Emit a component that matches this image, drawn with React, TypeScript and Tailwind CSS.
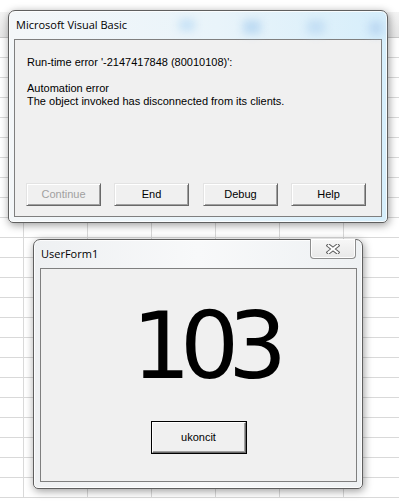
import React from "react";

const colWidths = ["w-[24px]", "w-[64px]", "w-[64px]", "w-[64px]", "w-[64px]", "w-[64px]", "w-[64px]"];
const rows = Array.from({ length: 23 }, (_, i) => i);

function Sheet() {
  return (
    <div className="flex flex-col bg-white">
      <div className="h-[12px] shrink-0" />
      <div className="flex h-[26px] shrink-0 bg-[linear-gradient(to_bottom,#f4f4f4,#e6e6e6)] border-b border-[#c9c9c9]">
        {colWidths.map((w, i) => (
          <div key={i} className={`${w} shrink-0 border-r border-[#d0d0d0]`} />
        ))}
      </div>
      {rows.map((r) => (
        <div key={r} className="flex h-[20px] shrink-0 border-b border-[#d9d9d9]">
          {colWidths.map((w, i) => (
            <div key={i} className={`${w} shrink-0 border-r border-[#d9d9d9]`} />
          ))}
        </div>
      ))}
    </div>
  );
}

function ClassicButton({ label, disabled }: { label: string; disabled?: boolean }) {
  return (
    <div
      className={
        "flex h-[23px] w-[75px] items-center justify-center bg-[#f0f0f0] border border-t-[#e3e3e3] border-l-[#e3e3e3] border-r-[#696969] border-b-[#696969] shadow-[inset_1px_1px_0_#ffffff,inset_-1px_-1px_0_#a0a0a0] text-[11px] " +
        (disabled ? "text-[#a0a0a0]" : "text-black")
      }
    >
      {label}
    </div>
  );
}

export default function App() {
  return (
    <div className="relative h-[503px] w-[399px] overflow-hidden bg-white font-['Liberation_Sans',Arial,sans-serif]">
      <Sheet />

      {/* Microsoft Visual Basic error dialog */}
      <div className="absolute left-[8px] top-[10px] flex h-[213px] w-[380px] flex-col rounded-t-[7px] rounded-b-[5px] border border-[#5f5f5f] bg-[linear-gradient(to_right,#f4f7f9,#e9f4fa_55%,#d6eefb)] px-[5px] pb-[5px] shadow-[1px_2px_8px_rgba(0,0,0,0.4),inset_0_0_0_1px_rgba(255,255,255,0.8)]">
        <div className="pointer-events-none absolute left-[170px] top-[8px] h-[12px] w-[16px] rounded-sm bg-[#c7e2f6] blur-[4px]" />
        <div className="pointer-events-none absolute left-[234px] top-[9px] h-[14px] w-[18px] rounded-sm bg-[#bcdaf2] blur-[4px]" />
        <div className="pointer-events-none absolute left-[298px] top-[9px] h-[14px] w-[18px] rounded-sm bg-[#c3def4] blur-[4px]" />
        <div className="pointer-events-none absolute left-[360px] top-[10px] h-[14px] w-[14px] rounded-sm bg-[#bcd8f2] blur-[4px]" />
        <div className="relative flex h-[28px] shrink-0 items-center pl-[2px] font-['Open_Sans',sans-serif] text-[11px] text-black">
          Microsoft Visual Basic
        </div>
        <div className="flex flex-1 flex-col border border-[#7f7f7f] bg-[#f0f0f0] pl-[11px] pt-[16px] pb-[10px]">
          <div className="pl-[1px] text-[11px] leading-[13px] text-black">
            <div>Run-time error '-2147417848 (80010108)':</div>
            <div className="h-[13px]" />
            <div>Automation error</div>
            <div>The object invoked has disconnected from its clients.</div>
          </div>
          <div className="mt-auto flex gap-[13px]">
            <ClassicButton label="Continue" disabled />
            <ClassicButton label="End" />
            <div className="ml-[1px]">
              <ClassicButton label="Debug" />
            </div>
            <ClassicButton label="Help" />
          </div>
        </div>
      </div>

      {/* UserForm1 */}
      <div className="absolute left-[33px] top-[239px] flex h-[250px] w-[330px] flex-col rounded-t-[7px] rounded-b-[5px] border border-[#5f5f5f] bg-[linear-gradient(to_right,#eef0f2,#f8f9fa_50%,#eef1f3)] pl-[6px] pr-[5px] pb-[6px] shadow-[1px_2px_8px_rgba(0,0,0,0.4),inset_0_0_0_1px_rgba(255,255,255,0.8)]">
        <div className="absolute right-[6px] top-[-1px] flex h-[20px] w-[46px] items-center justify-center rounded-b-[4px] border border-t-0 border-[#8d8d8d] bg-[linear-gradient(to_bottom,#f7f7f7,#e8e8e8)] shadow-[inset_0_0_0_1px_rgba(255,255,255,0.9)]">
          <svg width="14" height="10" viewBox="0 0 14 10">
            <path d="M2.5 1.5 L11.5 8.5 M11.5 1.5 L2.5 8.5" stroke="#5b5b5b" strokeWidth="4" strokeLinecap="square" />
            <path d="M2.5 1.5 L11.5 8.5 M11.5 1.5 L2.5 8.5" stroke="#ffffff" strokeWidth="2" strokeLinecap="square" />
          </svg>
        </div>
        <div className="flex h-[28px] shrink-0 items-center pl-[1px] font-['Open_Sans',sans-serif] text-[11px] text-black">
          UserForm1
        </div>
        <div className="flex flex-1 flex-col items-center border border-[#7f7f7f] bg-[#f0f0f0]">
          <div className="mt-[31px] pl-[11px] font-['DejaVu_Sans',sans-serif] text-[93px] leading-none tracking-[-11px] text-black">
            103
          </div>
          <div className="mt-[28px] border border-black">
            <div className="flex h-[31px] w-[94px] items-center justify-center bg-[#f0f0f0] border border-t-[#ffffff] border-l-[#ffffff] border-r-[#696969] border-b-[#696969] shadow-[inset_-1px_-1px_0_#a0a0a0] text-[11px] text-black">
              ukoncit
            </div>
          </div>
        </div>
      </div>
    </div>
  );
}
